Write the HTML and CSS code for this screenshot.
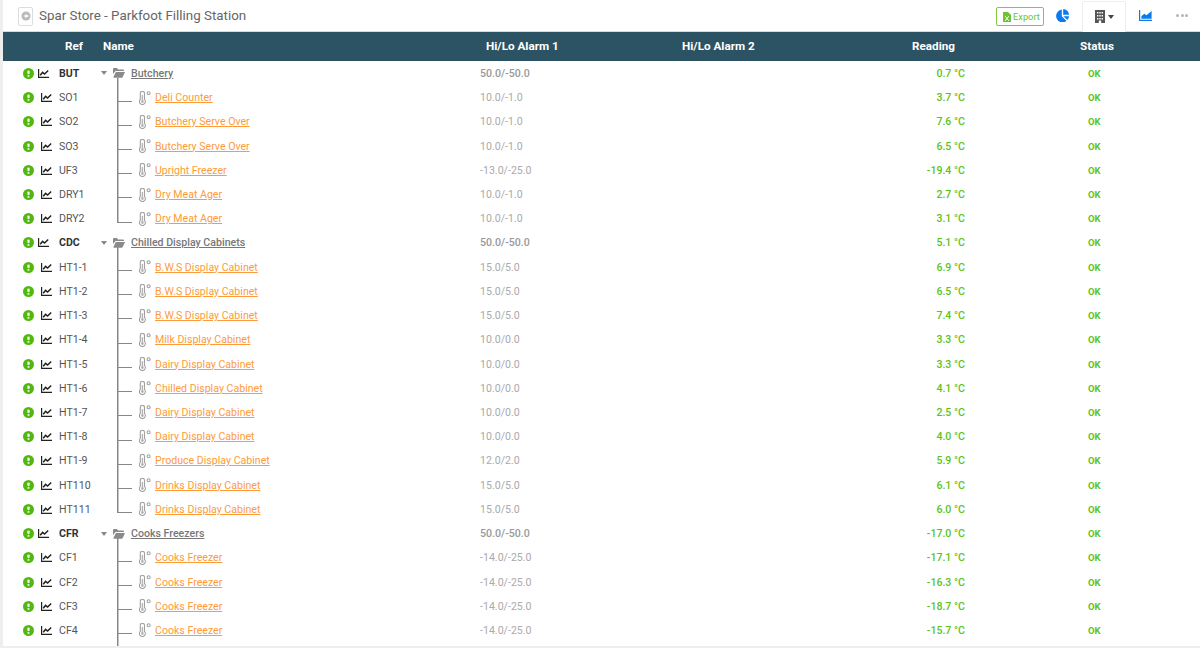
FILE: index.html
```html
<!DOCTYPE html>
<html lang="en">
<head>
<meta charset="utf-8">
<title>Spar Store - Parkfoot Filling Station</title>
<link rel="stylesheet" href="styles.css">
</head>
<body>
<svg class="defs" width="0" height="0" aria-hidden="true">
  <symbol id="st" viewBox="0 0 11 11"><circle cx="5.500" cy="5.500" r="5.500" fill="#52b80f"/><rect x="4.300" y="2.400" width="2.400" height="3.800" rx="1.100" fill="#eaf6df"/><rect x="4.400" y="7" width="2.200" height="1.800" rx=".9" fill="#eaf6df"/></symbol>
  <symbol id="ch" viewBox="0 0 11 9"><path d="M.6 0v8.300H11" fill="none" stroke="#222" stroke-width="1.200"/><path d="M2.200 6.300 4.600 3.400l2 1.700 3.600-3.600" fill="none" stroke="#222" stroke-width="1.500"/></symbol>
  <symbol id="fo" viewBox="0 0 12 10"><path d="M0 1a1 1 0 0 1 1-1h3l1 1.400h5a1 1 0 0 1 1 1V3H2.500L0 6z" fill="#8a8a8a"/><path d="M2.900 4H12l-2.400 5.200a1 1 0 0 1-.8.500H1a.6.6 0 0 1-.5-.9z" fill="#8a8a8a"/></symbol>
  <symbol id="th" viewBox="0 0 12 14"><path d="M1.300 2.300a2.100 2.100 0 0 1 4.200 0v6.100a3 3 0 1 1-4.200 0z" fill="#fff" stroke="#a0a0a0" stroke-width="1.100"/><rect x="2.700" y="4" width="1.400" height="6" fill="#b5b5b5"/><circle cx="3.400" cy="10.600" r="1.400" fill="#b5b5b5"/><circle cx="9.600" cy="2.200" r="1.500" fill="none" stroke="#a0a0a0" stroke-width="1.100"/></symbol>
</svg>
<div class="page">
  <header class="topbar">
    <div class="title-wrap">
      <a class="back"><svg width="12" height="12" viewBox="0 0 12 12"><circle cx="6" cy="6" r="5.500" fill="#bbb"/><path d="M6.500 3.200 3.600 6l2.900 2.800V6.900H9V5.100H6.500z" fill="#fff"/></svg></a>
      <h1 class="title">Spar Store - Parkfoot Filling Station</h1>
    </div>
    <nav class="tools">
      <a class="export"><svg width="8" height="10" viewBox="0 0 8 10"><path d="M0 0h5l3 3v7H0z" fill="#6cc433"/><path d="M2.200 4.200 5.800 8.800M5.800 4.200 2.200 8.800" stroke="#fff" stroke-width="1"/></svg>Export</a>
      <a class="tool t-pie"><svg width="13" height="13" viewBox="0 0 13 13"><path d="M5.800.6v6.700l4.700 4.700A6.400 6.400 0 1 1 5.800.6z" fill="#0a7bee"/><path d="M7.200 0A6 6 0 0 1 13 5.800H7.200z" fill="#0a7bee"/><path d="M7.400 7.200H13a6 6 0 0 1-1.600 3.900z" fill="#0a7bee"/></svg></a>
      <a class="tool t-tab"><svg width="10" height="13" viewBox="0 0 10 13"><path d="M0 0h10v13H6.200v-2.400H3.800V13H0z" fill="#555"/><path d="M2 2h1.400v1.400H2zm2.300 0h1.400v1.400H4.300zm2.300 0H8v1.400H6.600zM2 5h1.400v1.400H2zm2.300 0h1.400v1.400H4.300zm2.300 0H8v1.400H6.600zM2 8h1.400v1.400H2zm2.300 0h1.400v1.400H4.300zm2.300 0H8v1.400H6.600z" fill="#fff"/></svg><span class="caret dark"></span></a>
      <a class="tool t-area"><svg width="13" height="11" viewBox="0 0 13 11"><path d="M.6 0v10.300H13" fill="none" stroke="#0a7bee" stroke-width="1.200"/><path d="M2.400 8.800V6.300l2.800-2.600 2.300 1.600L12.600 1v7.800z" fill="#0a7bee"/></svg></a>
      <a class="tool t-more"><span class="dot"></span><span class="dot"></span><span class="dot"></span></a>
    </nav>
  </header>
  <div class="table">
    <div class="row head"><span></span><span></span><span class="h-ref">Ref</span><span class="h-name">Name</span><span class="h-a">Hi/Lo Alarm 1</span><span class="h-a">Hi/Lo Alarm 2</span><span class="h-read">Reading</span><span class="h-stat">Status</span></div>

    <div class="row group"><span class="c-st"><svg class="i-st"><use href="#st"/></svg></span><span class="c-ch"><svg class="i-ch"><use href="#ch"/></svg></span><span class="c-ref">BUT</span><span class="tree t-group"><span class="caret"></span><svg class="i-fo"><use href="#fo"/></svg><a class="g-link">Butchery</a></span><span class="c-al">50.0/-50.0</span><span></span><span class="c-rd">0.7 °C</span><span class="c-ok">OK</span></div>
    <div class="row"><span class="c-st"><svg class="i-st"><use href="#st"/></svg></span><span class="c-ch"><svg class="i-ch"><use href="#ch"/></svg></span><span class="c-ref">SO1</span><span class="tree t-child"><svg class="i-th"><use href="#th"/></svg><a class="link">Deli Counter</a></span><span class="c-al">10.0/-1.0</span><span></span><span class="c-rd">3.7 °C</span><span class="c-ok">OK</span></div>
    <div class="row"><span class="c-st"><svg class="i-st"><use href="#st"/></svg></span><span class="c-ch"><svg class="i-ch"><use href="#ch"/></svg></span><span class="c-ref">SO2</span><span class="tree t-child"><svg class="i-th"><use href="#th"/></svg><a class="link">Butchery Serve Over</a></span><span class="c-al">10.0/-1.0</span><span></span><span class="c-rd">7.6 °C</span><span class="c-ok">OK</span></div>
    <div class="row"><span class="c-st"><svg class="i-st"><use href="#st"/></svg></span><span class="c-ch"><svg class="i-ch"><use href="#ch"/></svg></span><span class="c-ref">SO3</span><span class="tree t-child"><svg class="i-th"><use href="#th"/></svg><a class="link">Butchery Serve Over</a></span><span class="c-al">10.0/-1.0</span><span></span><span class="c-rd">6.5 °C</span><span class="c-ok">OK</span></div>
    <div class="row"><span class="c-st"><svg class="i-st"><use href="#st"/></svg></span><span class="c-ch"><svg class="i-ch"><use href="#ch"/></svg></span><span class="c-ref">UF3</span><span class="tree t-child"><svg class="i-th"><use href="#th"/></svg><a class="link">Upright Freezer</a></span><span class="c-al">-13.0/-25.0</span><span></span><span class="c-rd">-19.4 °C</span><span class="c-ok">OK</span></div>
    <div class="row"><span class="c-st"><svg class="i-st"><use href="#st"/></svg></span><span class="c-ch"><svg class="i-ch"><use href="#ch"/></svg></span><span class="c-ref">DRY1</span><span class="tree t-child"><svg class="i-th"><use href="#th"/></svg><a class="link">Dry Meat Ager</a></span><span class="c-al">10.0/-1.0</span><span></span><span class="c-rd">2.7 °C</span><span class="c-ok">OK</span></div>
    <div class="row"><span class="c-st"><svg class="i-st"><use href="#st"/></svg></span><span class="c-ch"><svg class="i-ch"><use href="#ch"/></svg></span><span class="c-ref">DRY2</span><span class="tree t-last"><svg class="i-th"><use href="#th"/></svg><a class="link">Dry Meat Ager</a></span><span class="c-al">10.0/-1.0</span><span></span><span class="c-rd">3.1 °C</span><span class="c-ok">OK</span></div>

    <div class="row group"><span class="c-st"><svg class="i-st"><use href="#st"/></svg></span><span class="c-ch"><svg class="i-ch"><use href="#ch"/></svg></span><span class="c-ref">CDC</span><span class="tree t-group"><span class="caret"></span><svg class="i-fo"><use href="#fo"/></svg><a class="g-link">Chilled Display Cabinets</a></span><span class="c-al">50.0/-50.0</span><span></span><span class="c-rd">5.1 °C</span><span class="c-ok">OK</span></div>
    <div class="row"><span class="c-st"><svg class="i-st"><use href="#st"/></svg></span><span class="c-ch"><svg class="i-ch"><use href="#ch"/></svg></span><span class="c-ref">HT1-1</span><span class="tree t-child"><svg class="i-th"><use href="#th"/></svg><a class="link">B.W.S Display Cabinet</a></span><span class="c-al">15.0/5.0</span><span></span><span class="c-rd">6.9 °C</span><span class="c-ok">OK</span></div>
    <div class="row"><span class="c-st"><svg class="i-st"><use href="#st"/></svg></span><span class="c-ch"><svg class="i-ch"><use href="#ch"/></svg></span><span class="c-ref">HT1-2</span><span class="tree t-child"><svg class="i-th"><use href="#th"/></svg><a class="link">B.W.S Display Cabinet</a></span><span class="c-al">15.0/5.0</span><span></span><span class="c-rd">6.5 °C</span><span class="c-ok">OK</span></div>
    <div class="row"><span class="c-st"><svg class="i-st"><use href="#st"/></svg></span><span class="c-ch"><svg class="i-ch"><use href="#ch"/></svg></span><span class="c-ref">HT1-3</span><span class="tree t-child"><svg class="i-th"><use href="#th"/></svg><a class="link">B.W.S Display Cabinet</a></span><span class="c-al">15.0/5.0</span><span></span><span class="c-rd">7.4 °C</span><span class="c-ok">OK</span></div>
    <div class="row"><span class="c-st"><svg class="i-st"><use href="#st"/></svg></span><span class="c-ch"><svg class="i-ch"><use href="#ch"/></svg></span><span class="c-ref">HT1-4</span><span class="tree t-child"><svg class="i-th"><use href="#th"/></svg><a class="link">Milk Display Cabinet</a></span><span class="c-al">10.0/0.0</span><span></span><span class="c-rd">3.3 °C</span><span class="c-ok">OK</span></div>
    <div class="row"><span class="c-st"><svg class="i-st"><use href="#st"/></svg></span><span class="c-ch"><svg class="i-ch"><use href="#ch"/></svg></span><span class="c-ref">HT1-5</span><span class="tree t-child"><svg class="i-th"><use href="#th"/></svg><a class="link">Dairy Display Cabinet</a></span><span class="c-al">10.0/0.0</span><span></span><span class="c-rd">3.3 °C</span><span class="c-ok">OK</span></div>
    <div class="row"><span class="c-st"><svg class="i-st"><use href="#st"/></svg></span><span class="c-ch"><svg class="i-ch"><use href="#ch"/></svg></span><span class="c-ref">HT1-6</span><span class="tree t-child"><svg class="i-th"><use href="#th"/></svg><a class="link">Chilled Display Cabinet</a></span><span class="c-al">10.0/0.0</span><span></span><span class="c-rd">4.1 °C</span><span class="c-ok">OK</span></div>
    <div class="row"><span class="c-st"><svg class="i-st"><use href="#st"/></svg></span><span class="c-ch"><svg class="i-ch"><use href="#ch"/></svg></span><span class="c-ref">HT1-7</span><span class="tree t-child"><svg class="i-th"><use href="#th"/></svg><a class="link">Dairy Display Cabinet</a></span><span class="c-al">10.0/0.0</span><span></span><span class="c-rd">2.5 °C</span><span class="c-ok">OK</span></div>
    <div class="row"><span class="c-st"><svg class="i-st"><use href="#st"/></svg></span><span class="c-ch"><svg class="i-ch"><use href="#ch"/></svg></span><span class="c-ref">HT1-8</span><span class="tree t-child"><svg class="i-th"><use href="#th"/></svg><a class="link">Dairy Display Cabinet</a></span><span class="c-al">10.0/0.0</span><span></span><span class="c-rd">4.0 °C</span><span class="c-ok">OK</span></div>
    <div class="row"><span class="c-st"><svg class="i-st"><use href="#st"/></svg></span><span class="c-ch"><svg class="i-ch"><use href="#ch"/></svg></span><span class="c-ref">HT1-9</span><span class="tree t-child"><svg class="i-th"><use href="#th"/></svg><a class="link">Produce Display Cabinet</a></span><span class="c-al">12.0/2.0</span><span></span><span class="c-rd">5.9 °C</span><span class="c-ok">OK</span></div>
    <div class="row"><span class="c-st"><svg class="i-st"><use href="#st"/></svg></span><span class="c-ch"><svg class="i-ch"><use href="#ch"/></svg></span><span class="c-ref">HT110</span><span class="tree t-child"><svg class="i-th"><use href="#th"/></svg><a class="link">Drinks Display Cabinet</a></span><span class="c-al">15.0/5.0</span><span></span><span class="c-rd">6.1 °C</span><span class="c-ok">OK</span></div>
    <div class="row"><span class="c-st"><svg class="i-st"><use href="#st"/></svg></span><span class="c-ch"><svg class="i-ch"><use href="#ch"/></svg></span><span class="c-ref">HT111</span><span class="tree t-last"><svg class="i-th"><use href="#th"/></svg><a class="link">Drinks Display Cabinet</a></span><span class="c-al">15.0/5.0</span><span></span><span class="c-rd">6.0 °C</span><span class="c-ok">OK</span></div>

    <div class="row group"><span class="c-st"><svg class="i-st"><use href="#st"/></svg></span><span class="c-ch"><svg class="i-ch"><use href="#ch"/></svg></span><span class="c-ref">CFR</span><span class="tree t-group"><span class="caret"></span><svg class="i-fo"><use href="#fo"/></svg><a class="g-link">Cooks Freezers</a></span><span class="c-al">50.0/-50.0</span><span></span><span class="c-rd">-17.0 °C</span><span class="c-ok">OK</span></div>
    <div class="row"><span class="c-st"><svg class="i-st"><use href="#st"/></svg></span><span class="c-ch"><svg class="i-ch"><use href="#ch"/></svg></span><span class="c-ref">CF1</span><span class="tree t-child"><svg class="i-th"><use href="#th"/></svg><a class="link">Cooks Freezer</a></span><span class="c-al">-14.0/-25.0</span><span></span><span class="c-rd">-17.1 °C</span><span class="c-ok">OK</span></div>
    <div class="row"><span class="c-st"><svg class="i-st"><use href="#st"/></svg></span><span class="c-ch"><svg class="i-ch"><use href="#ch"/></svg></span><span class="c-ref">CF2</span><span class="tree t-child"><svg class="i-th"><use href="#th"/></svg><a class="link">Cooks Freezer</a></span><span class="c-al">-14.0/-25.0</span><span></span><span class="c-rd">-16.3 °C</span><span class="c-ok">OK</span></div>
    <div class="row"><span class="c-st"><svg class="i-st"><use href="#st"/></svg></span><span class="c-ch"><svg class="i-ch"><use href="#ch"/></svg></span><span class="c-ref">CF3</span><span class="tree t-child"><svg class="i-th"><use href="#th"/></svg><a class="link">Cooks Freezer</a></span><span class="c-al">-14.0/-25.0</span><span></span><span class="c-rd">-18.7 °C</span><span class="c-ok">OK</span></div>
    <div class="row"><span class="c-st"><svg class="i-st"><use href="#st"/></svg></span><span class="c-ch"><svg class="i-ch"><use href="#ch"/></svg></span><span class="c-ref">CF4</span><span class="tree t-child"><svg class="i-th"><use href="#th"/></svg><a class="link">Cooks Freezer</a></span><span class="c-al">-14.0/-25.0</span><span></span><span class="c-rd">-15.7 °C</span><span class="c-ok">OK</span></div>
    <div class="row"><span></span><span></span><span></span><span class="tree t-tail"></span></div>
  </div>
</div>
</body>
</html>
```

FILE: styles.css
```css
* { box-sizing: border-box; }
html, body { margin: 0; height: 648px; overflow: hidden; background: #fff; }
body { font-family: Roboto, "Liberation Sans", sans-serif; font-size: 10.6px; color: #555; }
.defs { display: block; height: 0; }
.page { height: 648px; margin-left: 3px; overflow: hidden; border-bottom: 2px solid #eee; box-shadow: -3px 0 0 #eee; position: relative; }

.topbar { height: 32px; display: flex; justify-content: space-between; align-items: flex-start; border-bottom: 1px solid #d5dbde; }
.title-wrap { display: flex; align-items: center; height: 30px; padding-left: 15px; }
.back { width: 15px; height: 19px; display: flex; align-items: center; justify-content: center; border: 1px solid #ddd; border-radius: 2px; margin-top: 2px; }
.back svg { width: 10px; height: 10px; }
.title { margin: 0 0 0 6px; font-size: 13.35px; font-weight: 400; color: #666; }

.tools { display: flex; align-items: flex-start; }
.export { display: flex; align-items: center; gap: 2px; width: 48px; height: 19px; margin-top: 7px; margin-right: 10px; padding-left: 6px; border: 1px solid #7ccb47; border-radius: 2px; color: #6cc433; font-size: 9.3px; }
.tool { display: flex; align-items: center; justify-content: center; height: 31px; }
.t-pie { width: 16px; margin-right: 12px; }
.t-tab { width: 44px; height: 32px; gap: 3px; border: 1px solid #eee; border-bottom: 0; border-radius: 2px 2px 0 0; background: #fff; margin-top: 1px; padding-bottom: 2px; }
.t-area { width: 38px; }
.t-more { width: 36px; gap: 1.5px; }
.dot { width: 3px; height: 3px; border-radius: 50%; background: #b5b5b5; }

.caret { display: inline-block; width: 0; height: 0; border: 3.5px solid transparent; border-top: 4px solid #888; border-bottom: 0; }
.caret.dark { border-top-color: #444; }

.table { display: grid; grid-template-rows: 29.3px; grid-auto-rows: 24.23px; }
.row { display: grid; grid-template-columns: 33px 23px 39px 382px 196px 230px 94px 1fr; align-items: center; height: 24.23px; }

.head { height: 29.3px; padding-bottom: 2px; background: #2c5364; color: #fff; font-weight: 700; font-size: 11.7px; }
.h-ref { padding-left: 6px; }
.h-name { padding-left: 5px; }
.h-a { padding-left: 6px; }
.h-read { padding-left: 6px; }
.h-stat { padding-left: 80px; }

.c-st { padding-left: 20px; display: flex; align-items: center; }
.c-ch { padding-left: 5px; display: flex; align-items: center; }
.group .c-ch { padding-left: 2px; }
.i-st { width: 11px; height: 11px; }
.i-ch { width: 11px; height: 9px; }
.i-fo { width: 12px; height: 10px; margin-left: 6px; }
.i-th { width: 12px; height: 14px; margin-left: 41px; margin-right: 4px; }

.c-ref { color: #555; }
.group .c-ref { color: #333; font-weight: 700; }
.group .c-al { font-weight: 500; color: #999; }
.c-al { color: #aaa; }
.c-rd { text-align: right; padding-right: 35px; color: #5cc41a; font-weight: 500; }
.c-ok { padding-left: 88px; color: #5cc41a; font-weight: 700; font-size: 9.5px; }

.tree { display: flex; align-items: center; height: 100%; background-repeat: no-repeat; }
.t-group { padding-left: 3px; background-image: linear-gradient(#888, #888); background-size: 1.5px 8px; background-position: 19px 100%; }
.t-child { background-image: linear-gradient(#888, #888), linear-gradient(#888, #888); background-size: 1.5px 100%, 15px 1px; background-position: 19px 0, 19px 15px; }
.t-last { background-image: linear-gradient(#888, #888), linear-gradient(#888, #888); background-size: 1.5px 16px, 15px 1px; background-position: 19px 0, 19px 15px; }
.t-tail { background-image: linear-gradient(#888, #888); background-size: 1.5px 100%; background-position: 19px 0; }

.link { color: #fd9b3a; text-decoration: underline; }
.g-link { color: #777; font-weight: 500; text-decoration: underline; margin-left: 6px; }
```
